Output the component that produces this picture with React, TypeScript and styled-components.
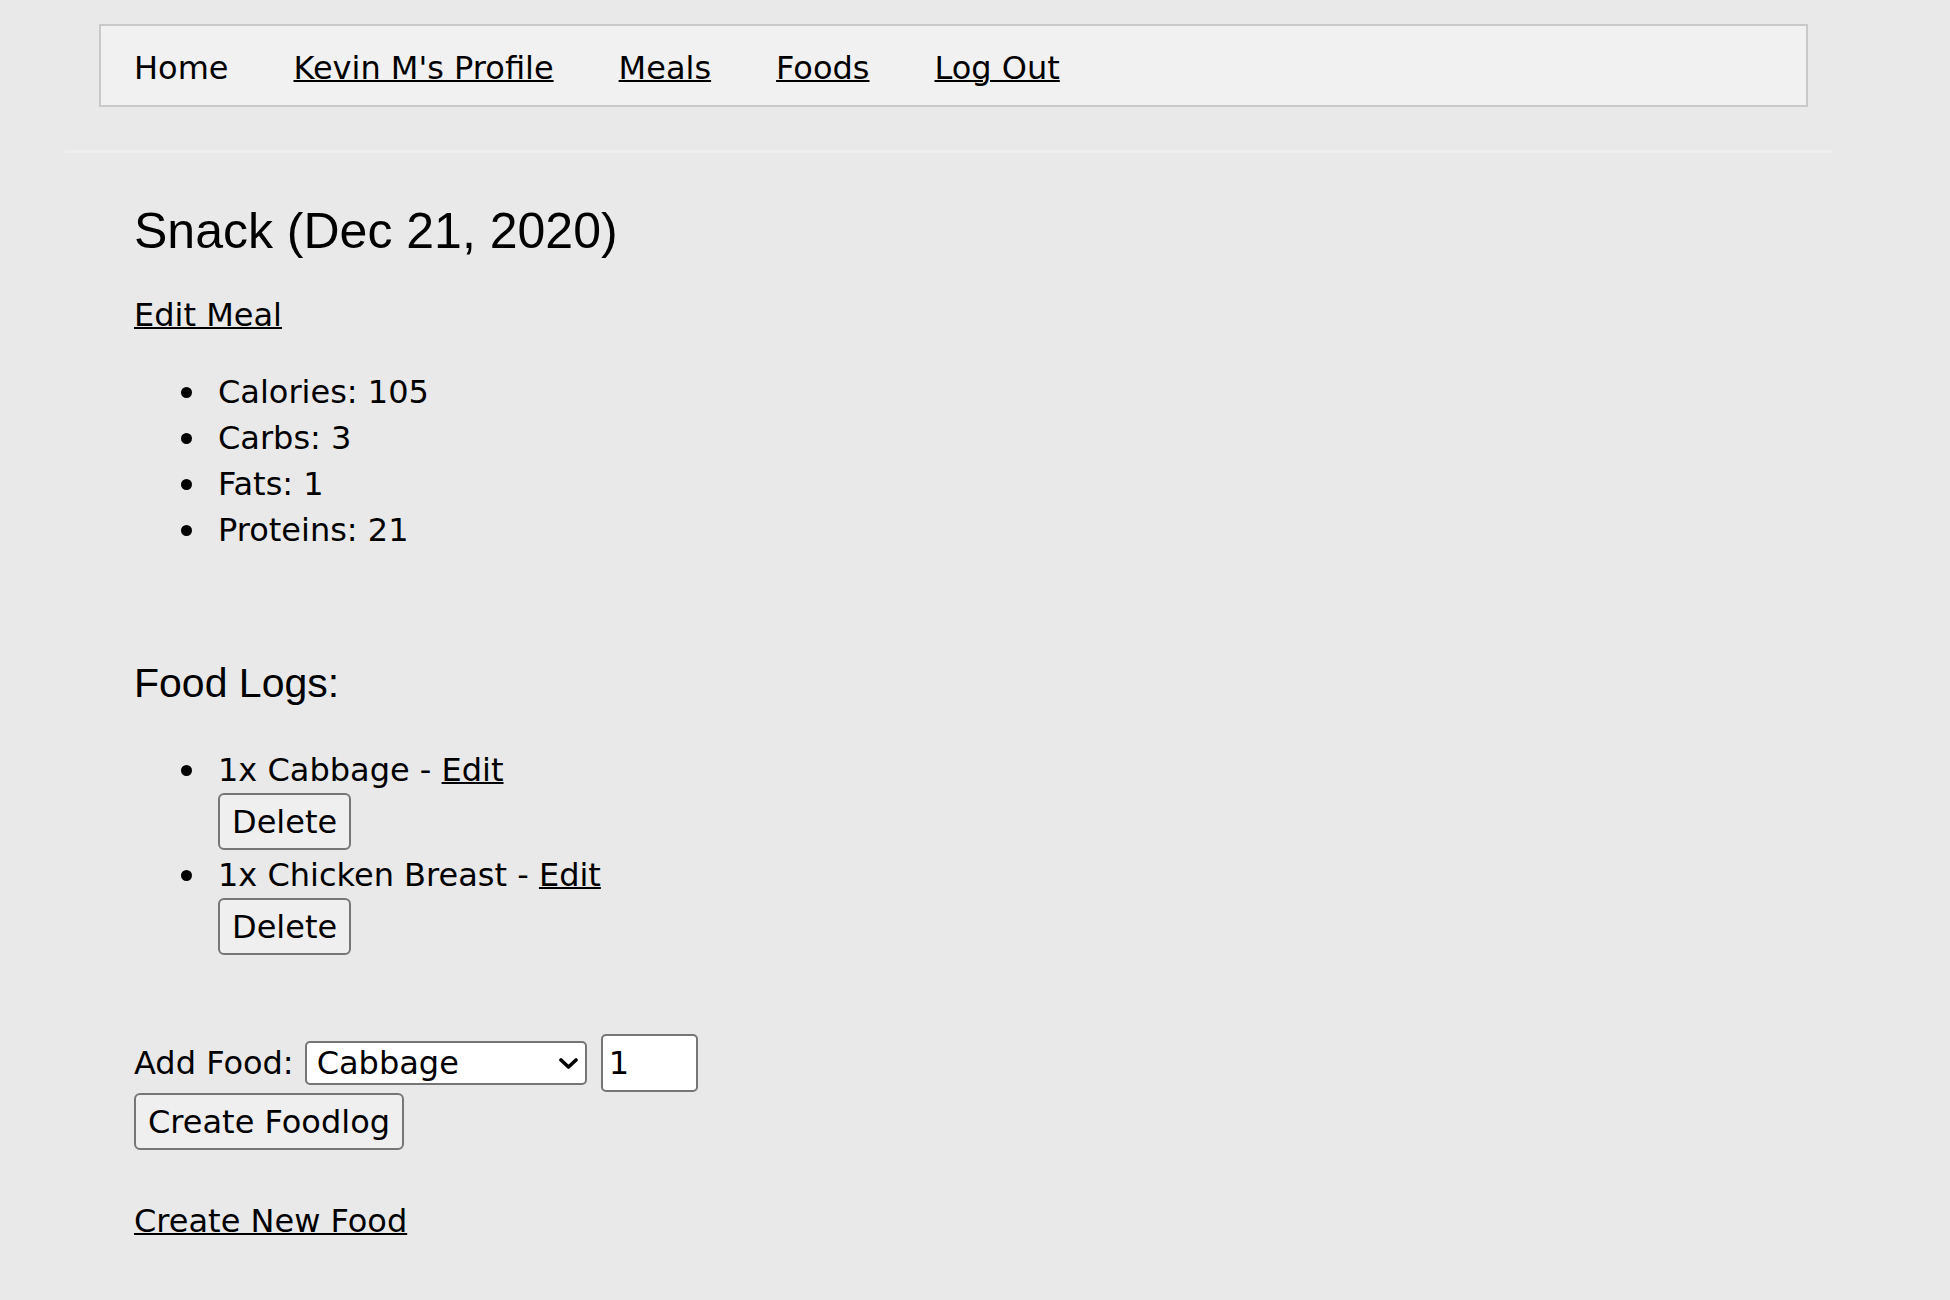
import React from "react";
import styled, { createGlobalStyle } from "styled-components";

const GlobalStyle = createGlobalStyle`
  html, body {
    margin: 0;
    padding: 0;
    background: #e9e9e9;
  }
  body {
    font-family: "DejaVu Sans", Verdana, sans-serif;
    font-size: 32px;
    color: #000;
  }
  * { box-sizing: border-box; }
`;

const Page = styled.div`
  width: 1950px;
  min-height: 1300px;
  padding-top: 24px;
  background: #e9e9e9;
`;

const Header = styled.header`
  width: 1767px;
  margin-left: 65px;
`;

const NavBar = styled.nav`
  width: 1709px;
  height: 83px;
  margin-left: 34px;
  display: flex;
  align-items: center;
  gap: 65px;
  padding: 4px 0 0 33px;
  background: #f1f1f1;
  border: 2px solid #c9c9c9;
  line-height: 46px;
`;

const NavLink = styled.a<{ $plain?: boolean }>`
  color: #000;
  text-decoration: ${(p) => (p.$plain ? "none" : "underline")};
  text-decoration-thickness: 2px;
  white-space: nowrap;
`;

const Rule = styled.div`
  height: 3px;
  margin-top: 43px;
  background: #eeeeee;
`;

const Main = styled.main`
  padding-left: 134px;
`;

const Title = styled.h2`
  margin: 49px 0 0;
  font-family: "Liberation Sans", Arial, sans-serif;
  font-weight: 400;
  font-size: 50px;
  line-height: 58px;
`;

const SectionTitle = styled.h3`
  margin: 106px 0 0;
  font-family: "Liberation Sans", Arial, sans-serif;
  font-weight: 400;
  font-size: 41px;
  line-height: 48px;
`;

const Para = styled.p<{ $top: number }>`
  margin: ${(p) => p.$top}px 0 0;
  line-height: 46px;
`;

const TextLink = styled.a`
  color: #000;
  text-decoration: underline;
  text-decoration-thickness: 2px;
  cursor: pointer;
`;

const List = styled.ul<{ $top: number }>`
  margin: ${(p) => p.$top}px 0 0;
  padding-left: 84px;
  list-style: none;
  line-height: 46px;
`;

const Item = styled.li`
  &::before {
    content: "";
    display: inline-block;
    width: 11px;
    height: 11px;
    margin-left: -37px;
    margin-right: 26px;
    border-radius: 50%;
    background: #000;
    vertical-align: 5.5px;
  }
`;

const Button = styled.button<{ $gapBelow?: number; $gapAbove?: number }>`
  display: block;
  height: 57px;
  margin: ${(p) => p.$gapAbove ?? 0}px 0 ${(p) => p.$gapBelow ?? 0}px;
  padding: 0 12px;
  font-family: "DejaVu Sans", Verdana, sans-serif;
  font-size: 32px;
  line-height: 1;
  color: #000;
  background: #efefef;
  border: 2px solid #767676;
  border-radius: 6px;
`;

const AddRow = styled.div`
  margin-top: 79px;
  height: 58px;
  display: flex;
  align-items: center;
  gap: 11px;
  line-height: 46px;
`;

const SelectWrap = styled.div`
  position: relative;
  display: inline-flex;
`;

const Select = styled.select`
  appearance: none;
  -webkit-appearance: none;
  width: 282px;
  height: 44px;
  padding: 0 40px 0 10px;
  font-family: "DejaVu Sans", Verdana, sans-serif;
  font-size: 32px;
  color: #000;
  background: #fff;
  border: 2px solid #767676;
  border-radius: 5px;
`;

const Chevron = styled.svg`
  position: absolute;
  right: 9px;
  top: 17px;
  width: 19px;
  height: 11px;
  pointer-events: none;
`;

const NumberField = styled.input`
  width: 97px;
  height: 58px;
  margin-left: 3px;
  padding: 0 6px;
  font-family: "DejaVu Sans", Verdana, sans-serif;
  font-size: 32px;
  color: #000;
  background: #fff;
  border: 2px solid #767676;
  border-radius: 5px;
`;

const stats = [
  ["Calories", 105],
  ["Carbs", 3],
  ["Fats", 1],
  ["Proteins", 21],
];

const logs = ["Cabbage", "Chicken Breast"];

export default function App() {
  return (
    <>
      <GlobalStyle />
      <Page>
        <Header>
          <NavBar>
            <NavLink $plain href="#">Home</NavLink>
            <NavLink href="#">Kevin M's Profile</NavLink>
            <NavLink href="#">Meals</NavLink>
            <NavLink href="#">Foods</NavLink>
            <NavLink href="#">Log Out</NavLink>
          </NavBar>
          <Rule />
        </Header>
        <Main>
          <Title>Snack (Dec 21, 2020)</Title>
          <Para $top={32}>
            <TextLink href="#">Edit Meal</TextLink>
          </Para>
          <List $top={31}>
            {stats.map(([k, v]) => (
              <Item key={k}>
                {k}: {v}
              </Item>
            ))}
          </List>
          <SectionTitle>Food Logs:</SectionTitle>
          <List $top={40}>
            {logs.map((name) => (
              <Item key={name}>
                1x {name} - <TextLink href="#">Edit</TextLink>
                <Button type="button" $gapBelow={2}>Delete</Button>
              </Item>
            ))}
          </List>
          <AddRow>
            <span>Add Food:</span>
            <SelectWrap>
              <Select defaultValue="Cabbage">
                <option>Cabbage</option>
                <option>Chicken Breast</option>
              </Select>
              <Chevron viewBox="0 0 19 11">
                <polyline
                  points="2,2 9.5,9 17,2"
                  fill="none"
                  stroke="#000"
                  strokeWidth="3.6"
                  strokeLinecap="round"
                  strokeLinejoin="round"
                />
              </Chevron>
            </SelectWrap>
            <NumberField type="text" defaultValue="1" inputMode="numeric" />
          </AddRow>
          <Button type="button" $gapAbove={1}>
            Create Foodlog
          </Button>
          <Para $top={48}>
            <TextLink href="#">Create New Food</TextLink>
          </Para>
        </Main>
      </Page>
    </>
  );
}
